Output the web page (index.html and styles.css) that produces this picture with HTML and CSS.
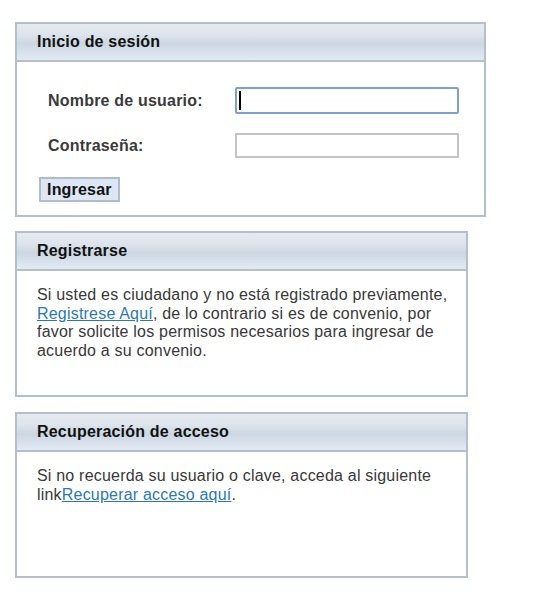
FILE: index.html
```html
<!DOCTYPE html>
<html lang="es">
<head>
<meta charset="utf-8">
<title>Inicio de sesión</title>
<link rel="stylesheet" href="styles.css">
</head>
<body>
<div class="page">
  <section class="panel panel-login">
    <h2 class="panel-head">Inicio de sesión</h2>
    <div class="panel-body login-body">
      <form class="login-form">
        <label class="lbl" for="user">Nombre de usuario:</label>
        <div class="field">
          <input id="user" class="txt txt-focus" type="text">
          <span class="caret"></span>
        </div>
        <label class="lbl" for="pass">Contraseña:</label>
        <div class="field">
          <input id="pass" class="txt" type="password">
        </div>
        <button type="button" class="btn">Ingresar</button>
      </form>
    </div>
  </section>

  <section class="panel panel-info">
    <h2 class="panel-head">Registrarse</h2>
    <div class="panel-body info-body">
      <p class="info">Si usted es ciudadano y no está registrado previamente, <a href="#">Registrese Aquí</a>, de lo contrario si es de convenio, por favor solicite los permisos necesarios para ingresar de acuerdo a su convenio.</p>
    </div>
  </section>

  <section class="panel panel-info">
    <h2 class="panel-head">Recuperación de acceso</h2>
    <div class="panel-body info-body">
      <p class="info">Si no recuerda su usuario o clave, acceda al siguiente link<a href="#">Recuperar acceso aquí</a>.</p>
    </div>
  </section>
</div>
</body>
</html>
```

FILE: styles.css
```css
html, body {
  margin: 0;
  padding: 0;
  background: #ffffff;
}

body {
  font-family: "Liberation Sans", Arial, sans-serif;
  font-size: 16px;
  letter-spacing: 0.2px;
  color: #333333;
}

.page {
  padding: 22px 0 0 15px;
  display: flex;
  flex-direction: column;
  gap: 14px;
}

.panel {
  border: 2px solid #b3bfcb;
  background: #ffffff;
  box-sizing: border-box;
}

.panel-login {
  width: 471px;
}

.panel-info {
  width: 453px;
}

.panel-info + .panel-info {
  margin-top: 1px;
}

.panel-head {
  margin: 0;
  height: 36px;
  display: flex;
  align-items: center;
  padding-left: 20px;
  font-size: 16px;
  font-weight: bold;
  color: #111111;
  border-bottom: 2px solid #b3bfcb;
  background: linear-gradient(to bottom, #e6ebf1 0%, #dde4ec 30%, #cdd7e1 55%, #d9e2ec 80%, #e2eaf3 100%);
}

.login-body {
  padding: 25px 0 13px 22px;
}

.login-form {
  display: grid;
  grid-template-columns: 196px 224px;
  row-gap: 19px;
  align-items: center;
}

.lbl {
  padding-left: 9px;
  font-weight: bold;
  color: #3a3a3a;
}

.field {
  position: relative;
  display: flex;
}

.txt {
  box-sizing: border-box;
  width: 224px;
  height: 25px;
  margin: 0;
  border: 2px solid #c3c3c3;
  background: #ffffff;
  font-family: inherit;
  font-size: 16px;
  outline: none;
}

.txt-focus {
  height: 27px;
  border-color: #7d9fd6;
  border-radius: 2px;
}

.caret {
  position: absolute;
  left: 4px;
  top: 4px;
  width: 2px;
  height: 19px;
  background: #000000;
}

.btn {
  grid-column: 1 / 2;
  justify-self: start;
  box-sizing: border-box;
  height: 25px;
  padding: 0 6px;
  margin: 0;
  border: 2px solid #b1bccb;
  background: #dde7f3;
  font-family: inherit;
  font-size: 16px;
  font-weight: bold;
  letter-spacing: 0.2px;
  color: #111111;
  cursor: pointer;
}

.info-body {
  box-sizing: border-box;
  height: 124px;
  padding: 15px 14px 0 20px;
}

.info {
  margin: 0;
  line-height: 18.5px;
  color: #383838;
}

.info a {
  color: #2a78b8;
  text-decoration: underline;
}
```
